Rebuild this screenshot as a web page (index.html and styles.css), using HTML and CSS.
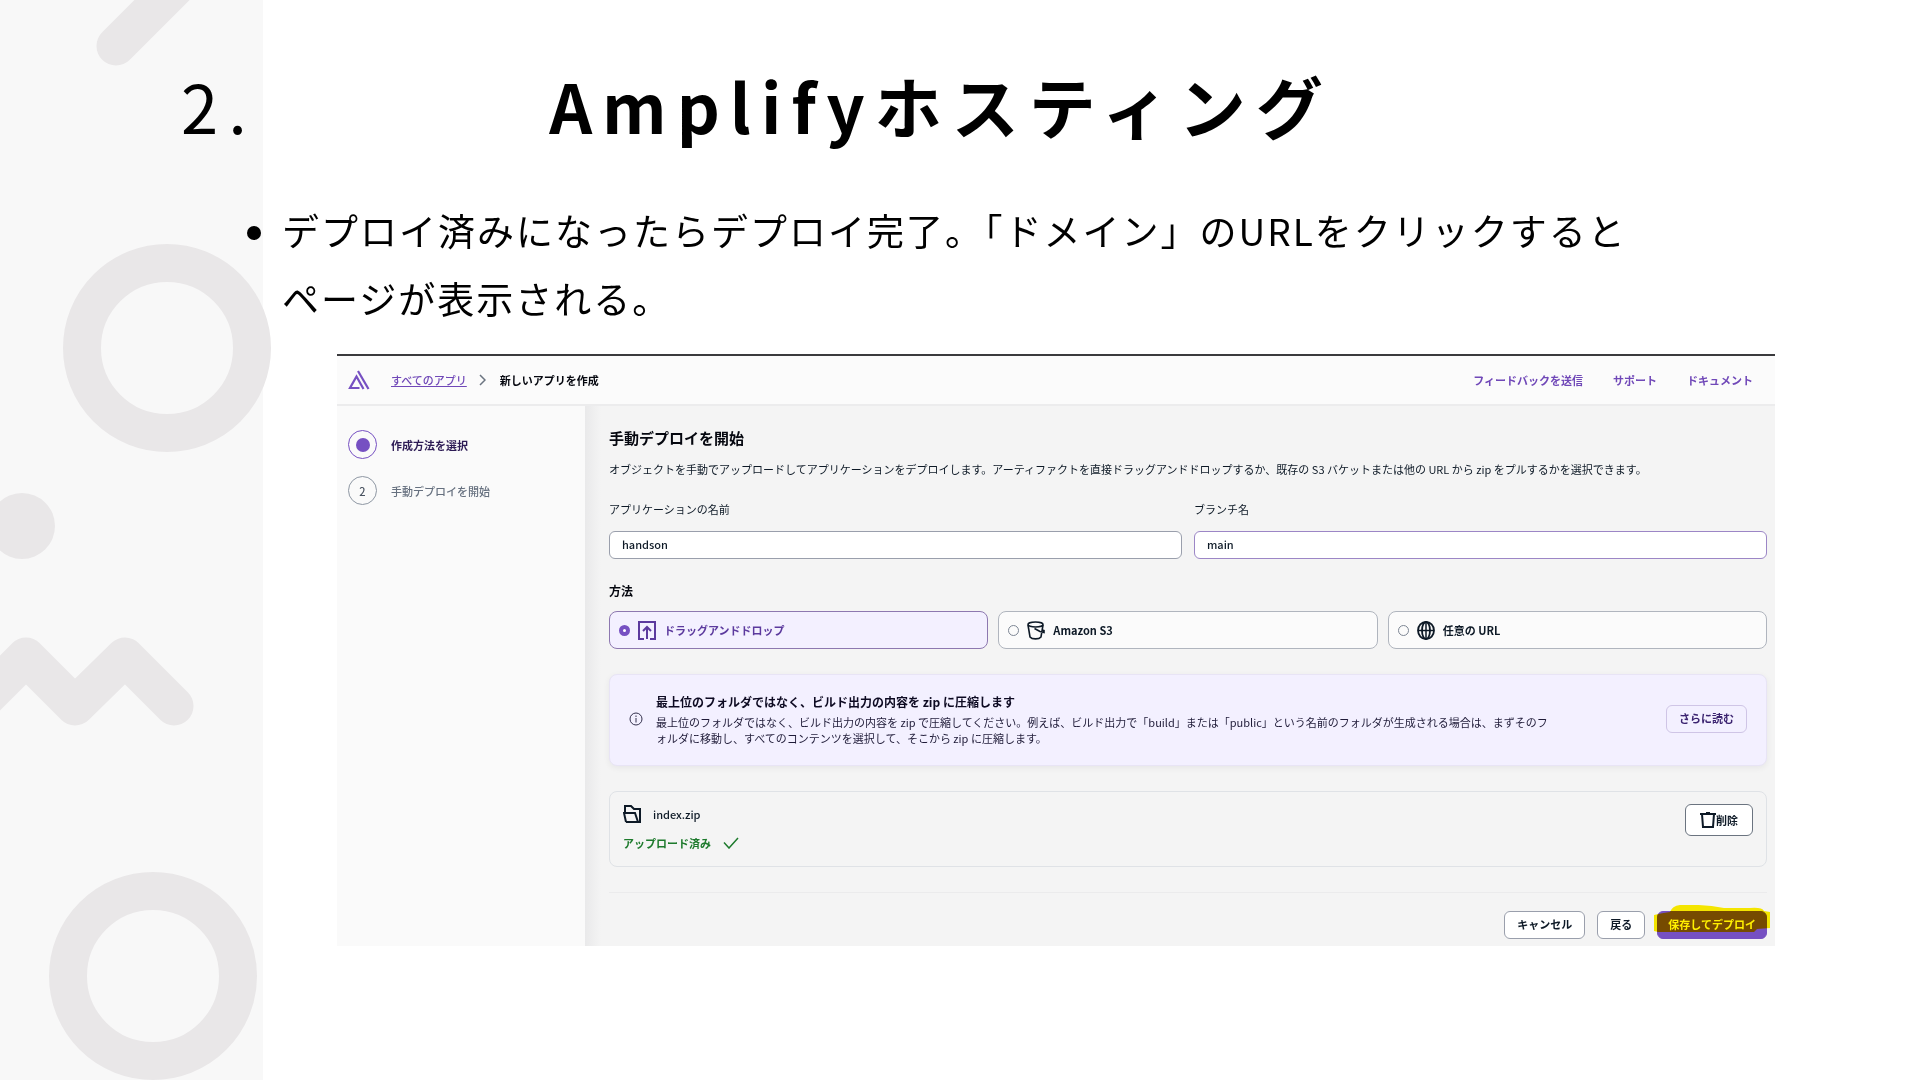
FILE: index.html
```html
<!DOCTYPE html>
<html lang="ja">
<head>
<meta charset="utf-8">
<title>Amplifyホスティング</title>
<link rel="stylesheet" href="styles.css">
</head>
<body>
<div class="slide">
    <!-- left decoration -->
    <div class="side-deco">
        <svg width="300" height="1080" viewBox="0 0 300 1080" fill="none" stroke="#e9e7e8" stroke-width="39" stroke-linecap="round" stroke-linejoin="round">
            <path d="M116 46L202 -40"/>
            <circle cx="167" cy="348" r="85" stroke-width="38"/>
            <circle cx="22" cy="526" r="33" fill="#e9e7e8" stroke="none"/>
            <path d="M-23 706L26 657L75 706L125 657L174 706"/>
            <circle cx="153" cy="976" r="85" stroke-width="38"/>
        </svg>
    </div>

    <h1 class="slide-title">
        <span class="number">2.</span>
        <span class="title-text">Amplifyホスティング</span>
    </h1>
    <ul class="slide-list">
        <li>デプロイ済みになったらデプロイ完了。「ドメイン」のURLをクリックするとページが表示される。</li>
    </ul>

    <div class="console">
        <header class="top-bar">
            <svg class="logo" width="22" height="20" viewBox="0 0 22 20" fill="none" stroke="#7650c2" stroke-width="2.200">
                <path d="M11.500 18H2L8.500 6.500L15.500 19"/>
                <path d="M10 1L20.500 19"/>
            </svg>
            <a class="crumb" href="#">すべてのアプリ</a>
            <svg class="chevron" width="7" height="12" viewBox="0 0 7 12" fill="none" stroke="#6b7480" stroke-width="1.500"><path d="M1 1L6 6L1 11"/></svg>
            <span class="current">新しいアプリを作成</span>
            <nav>
                <a href="#">フィードバックを送信</a>
                <a href="#">サポート</a>
                <a href="#">ドキュメント</a>
            </nav>
        </header>

        <div class="columns">
            <ol class="steps">
                <li class="active"><span class="dot"></span>作成方法を選択</li>
                <li><span class="dot">2</span>手動デプロイを開始</li>
            </ol>

            <form class="content">
                <h2>手動デプロイを開始</h2>
                <p class="description">オブジェクトを手動でアップロードしてアプリケーションをデプロイします。アーティファクトを直接ドラッグアンドドロップするか、既存の S3 バケットまたは他の URL から zip をプルするかを選択できます。</p>

                <div class="fields">
                    <div class="field">
                        <label for="app-name">アプリケーションの名前</label>
                        <input type="text" id="app-name" value="handson">
                    </div>
                    <div class="field focus">
                        <label for="branch">ブランチ名</label>
                        <input type="text" id="branch" value="main">
                    </div>
                </div>

                <h3>方法</h3>
                <div class="methods">
                    <label class="method selected">
                        <input type="radio" name="method" checked>
                        <svg width="18" height="19" viewBox="0 0 18 19" fill="none" stroke="#5c3a9e" stroke-width="2"><path d="M6 18H1V1H17V18H12M9 18V6M5 10L9 6L13 10"/></svg>
                        ドラッグアンドドロップ
                    </label>
                    <label class="method">
                        <input type="radio" name="method">
                        <svg width="18" height="19" viewBox="0 0 18 19" fill="none" stroke="#0d1926" stroke-width="1.600"><ellipse cx="8.500" cy="3.500" rx="7.500" ry="2.500"/><path d="M1 4L3 16C5 18.500 12 18.500 14 16L16 4M7.500 7.500L13 10.500L17 11.500V9.500L15.500 9"/></svg>
                        Amazon S3
                    </label>
                    <label class="method">
                        <input type="radio" name="method">
                        <svg width="18" height="19" viewBox="0 0 18 19" fill="none" stroke="#0d1926" stroke-width="1.800"><ellipse cx="9" cy="9.500" rx="8" ry="8.500"/><ellipse cx="9" cy="9.500" rx="4" ry="8.500"/><path d="M9 1V18M1 9.500H17" stroke-width="1.500"/></svg>
                        任意の URL
                    </label>
                </div>

                <div class="message">
                    <svg class="info" width="14" height="14" viewBox="0 0 14 14" fill="none" stroke="#33304d"><circle cx="7" cy="7" r="6"/><path d="M7 6V10.500M7 3.500V5"/></svg>
                    <div class="message-text">
                        <h4>最上位のフォルダではなく、ビルド出力の内容を zip に圧縮します</h4>
                        <p>最上位のフォルダではなく、ビルド出力の内容を zip で圧縮してください。例えば、ビルド出力で「build」または「public」という名前のフォルダが生成される場合は、まずそのフォルダに移動し、すべてのコンテンツを選択して、そこから zip に圧縮します。</p>
                    </div>
                    <button type="button" class="btn more">さらに読む</button>
                </div>

                <div class="file">
                    <div>
                        <div class="file-name">
                            <svg width="18" height="18" viewBox="0 0 18 18" fill="none" stroke="#0d1926" stroke-width="2"><path d="M3 17L1 8H12L15 17H3M2 8V1H8L11 4H17V17H15"/></svg>
                            index.zip
                        </div>
                        <div class="file-status">
                            アップロード済み
                            <svg width="16" height="12" viewBox="0 0 16 12" fill="none" stroke="#1d7a2c" stroke-width="1.500"><path d="M1 5.500L6 11L15 1"/></svg>
                        </div>
                    </div>
                    <button type="button" class="btn delete">
                        <svg width="16" height="16" viewBox="0 0 16 16" fill="none" stroke="#0d1926" stroke-width="2"><path d="M0 2H16M6 1H10M2 2L3 15H13L14 2"/></svg>削除
                    </button>
                </div>

                <div class="actions">
                    <button type="button" class="btn">キャンセル</button>
                    <button type="button" class="btn">戻る</button>
                    <div class="save-wrap">
                        <button type="submit" class="btn save">保存してデプロイ</button>
                        <!-- marker pen -->
                        <svg class="marker" width="116" height="28" viewBox="0 0 116 28" fill="#fff000"><path d="M0 10Q8 8 16 7Q18 1 26 0Q50 -1 70 3H96Q108 2 110 6L116 7V23L103 24L100 27H4L0 26Z"/></svg>
                    </div>
                </div>
            </form>
        </div>
    </div>
</div>
</body>
</html>
```
FILE: styles.css
```css
*{
    box-sizing: border-box;
}
body{
    margin: 0;
    background: #fff;
    color: #0d1926;
    font-family: "Noto Sans CJK JP", "Noto Sans", sans-serif;
    font-size: 11px;
    line-height: 16px;
}
h1, h2, h3, h4, p, ul, ol{
    margin: 0;
    padding: 0;
}
.slide{
    position: relative;
    min-height: 100vh;
    padding-top: 57px;
    overflow: hidden;
}
/* grey band with the shapes, behind the text */
.side-deco{
    position: absolute;
    top: 0;
    bottom: 0;
    left: 0;
    width: 263px;
    background: #f8f8f8;
    z-index: -1;
}
.slide-title{
    display: flex;
    padding: 0 295px 0 181px;
    color: #000;
    font-size: 67px;
    line-height: 96px;
    letter-spacing: 10px;
}
.number{
    font-weight: 400;
}
.title-text{
    flex: 1;
    text-align: center;
}
.slide-list{
    margin-top: 43px;
    padding: 0 280px 0 247px;
    list-style: none;
    color: #000;
    font-size: 37px;
    line-height: 68px;
    letter-spacing: 2px;
}
.slide-list li{
    display: flex;
}
.slide-list li::before{
    content: "";
    flex: none;
    width: 14px;
    height: 14px;
    margin: 30px 21px 0 0;
    border-radius: 50%;
    background: #000;
}

/* console window */
.console{
    margin: 22px 145px 0 337px;
    border-top: 2px solid #3a3a3d;
    background: #f4f4f4;
}
.top-bar{
    display: flex;
    align-items: center;
    height: 50px;
    padding: 0 22px 0 11px;
    border-bottom: 2px solid #ececed;
    background: #fbfbfb;
    font-weight: 700;
}
.top-bar a{
    color: #7048b8;
}
.crumb{
    margin: 0 12px 0 21px;
    font-weight: 500;
}
.current{
    margin-left: 14px;
    color: #05070f;
}
.top-bar nav{
    display: flex;
    gap: 30px;
    margin-left: auto;
}
.top-bar nav a{
    text-decoration: none;
}
.columns{
    display: flex;
}
.steps{
    width: 248px;
    padding: 24px 11px;
    background: #fafafa;
    list-style: none;
}
.steps li{
    display: flex;
    align-items: center;
    gap: 14px;
    margin-bottom: 17px;
    color: #66707f;
    font-weight: 500;
}
.steps .active{
    color: #2d1b55;
    font-weight: 700;
}
.dot{
    display: flex;
    align-items: center;
    justify-content: center;
    width: 29px;
    height: 29px;
    border: 1px solid #8e97a3;
    border-radius: 50%;
    color: #4a5360;
}
.active .dot{
    border-color: #7650c2;
}
.active .dot::before{
    content: "";
    width: 14px;
    height: 14px;
    border-radius: 50%;
    background: #7650c2;
}
.content{
    flex: 1;
    min-width: 0;
    padding: 20px 8px 7px 24px;
    background: linear-gradient(to right, #e9e9ea, #f4f4f4 16px);
}
h2{
    color: #05070f;
    font-size: 15px;
    line-height: 24px;
}
.description{
    margin-top: 11px;
}
.fields{
    display: flex;
    gap: 12px;
    margin-top: 24px;
}
.field{
    flex: 1;
}
.field label{
    display: block;
}
.field input{
    display: block;
    width: 100%;
    height: 28px;
    margin-top: 14px;
    padding: 0 12px 2px;
    border: 1px solid #9a9fac;
    border-radius: 6px;
    background: #fff;
    color: #0d1926;
    font: inherit;
    font-weight: 500;
}
.field.focus input{
    border-color: #9c86c6;
}
h3{
    margin: 24px 0 12px;
    color: #05070f;
    font-size: 12px;
    line-height: 16px;
}
.methods{
    display: flex;
    gap: 10px;
}
.method{
    flex: 1;
    display: flex;
    align-items: center;
    gap: 8px;
    height: 38px;
    padding: 0 9px;
    border: 1px solid #b0b5be;
    border-radius: 8px;
    background: #fbfbfb;
    font-weight: 700;
}
.method.selected{
    border-color: #8d78b0;
    background: #f3f0ff;
    color: #5c3a9e;
}
.method input{
    appearance: none;
    width: 11px;
    height: 11px;
    margin: 0;
    border: 1px solid #7d8694;
    border-radius: 50%;
}
.method input:checked{
    border: 4px solid #7650c2;
    background: #fff;
}
.message{
    display: flex;
    align-items: center;
    height: 92px;
    margin-top: 25px;
    padding: 0 19px 2px;
    border: 1px solid #e8e4f5;
    border-radius: 8px;
    background: #f3f0ff;
    box-shadow: 0 2px 6px rgba(13, 25, 38, 0.06);
}
.message-text{
    flex: 1;
    margin: 0 112px 0 13px;
    color: #1f1b38;
}
h4{
    margin-bottom: 3px;
    color: #0d0a22;
    font-size: 12px;
    line-height: 18px;
}
.btn{
    height: 28px;
    padding: 0 12px 2px;
    border: 1px solid #9a9fac;
    border-radius: 6px;
    background: #fff;
    color: #0d1926;
    font: inherit;
    font-weight: 700;
}
.more{
    border-color: #cfc5e6;
    background: transparent;
    color: #3b2370;
}
.file{
    display: flex;
    align-items: flex-start;
    justify-content: space-between;
    margin-top: 25px;
    padding: 12px 13px 14px;
    border: 1px solid #dfe2e6;
    border-radius: 8px;
}
.file-name, .file-status{
    display: flex;
    align-items: center;
    gap: 12px;
    height: 19px;
    font-weight: 500;
}
.file-status{
    margin-top: 10px;
    color: #1d7a2c;
    font-weight: 700;
}
.delete{
    display: flex;
    align-items: center;
    height: 32px;
    padding: 0 14px;
    border-color: #6b7480;
}
.actions{
    display: flex;
    justify-content: flex-end;
    gap: 12px;
    margin-top: 25px;
    padding-top: 18px;
    border-top: 1px solid #ebebec;
}
.save-wrap{
    position: relative;
}
.save{
    padding: 0 10px 2px;
    border-color: #7650c2;
    background: #7650c2;
    color: #fff;
}
/* marker lies over the button */
.marker{
    position: absolute;
    top: -6px;
    left: -3px;
    pointer-events: none;
    mix-blend-mode: multiply;
}
```
